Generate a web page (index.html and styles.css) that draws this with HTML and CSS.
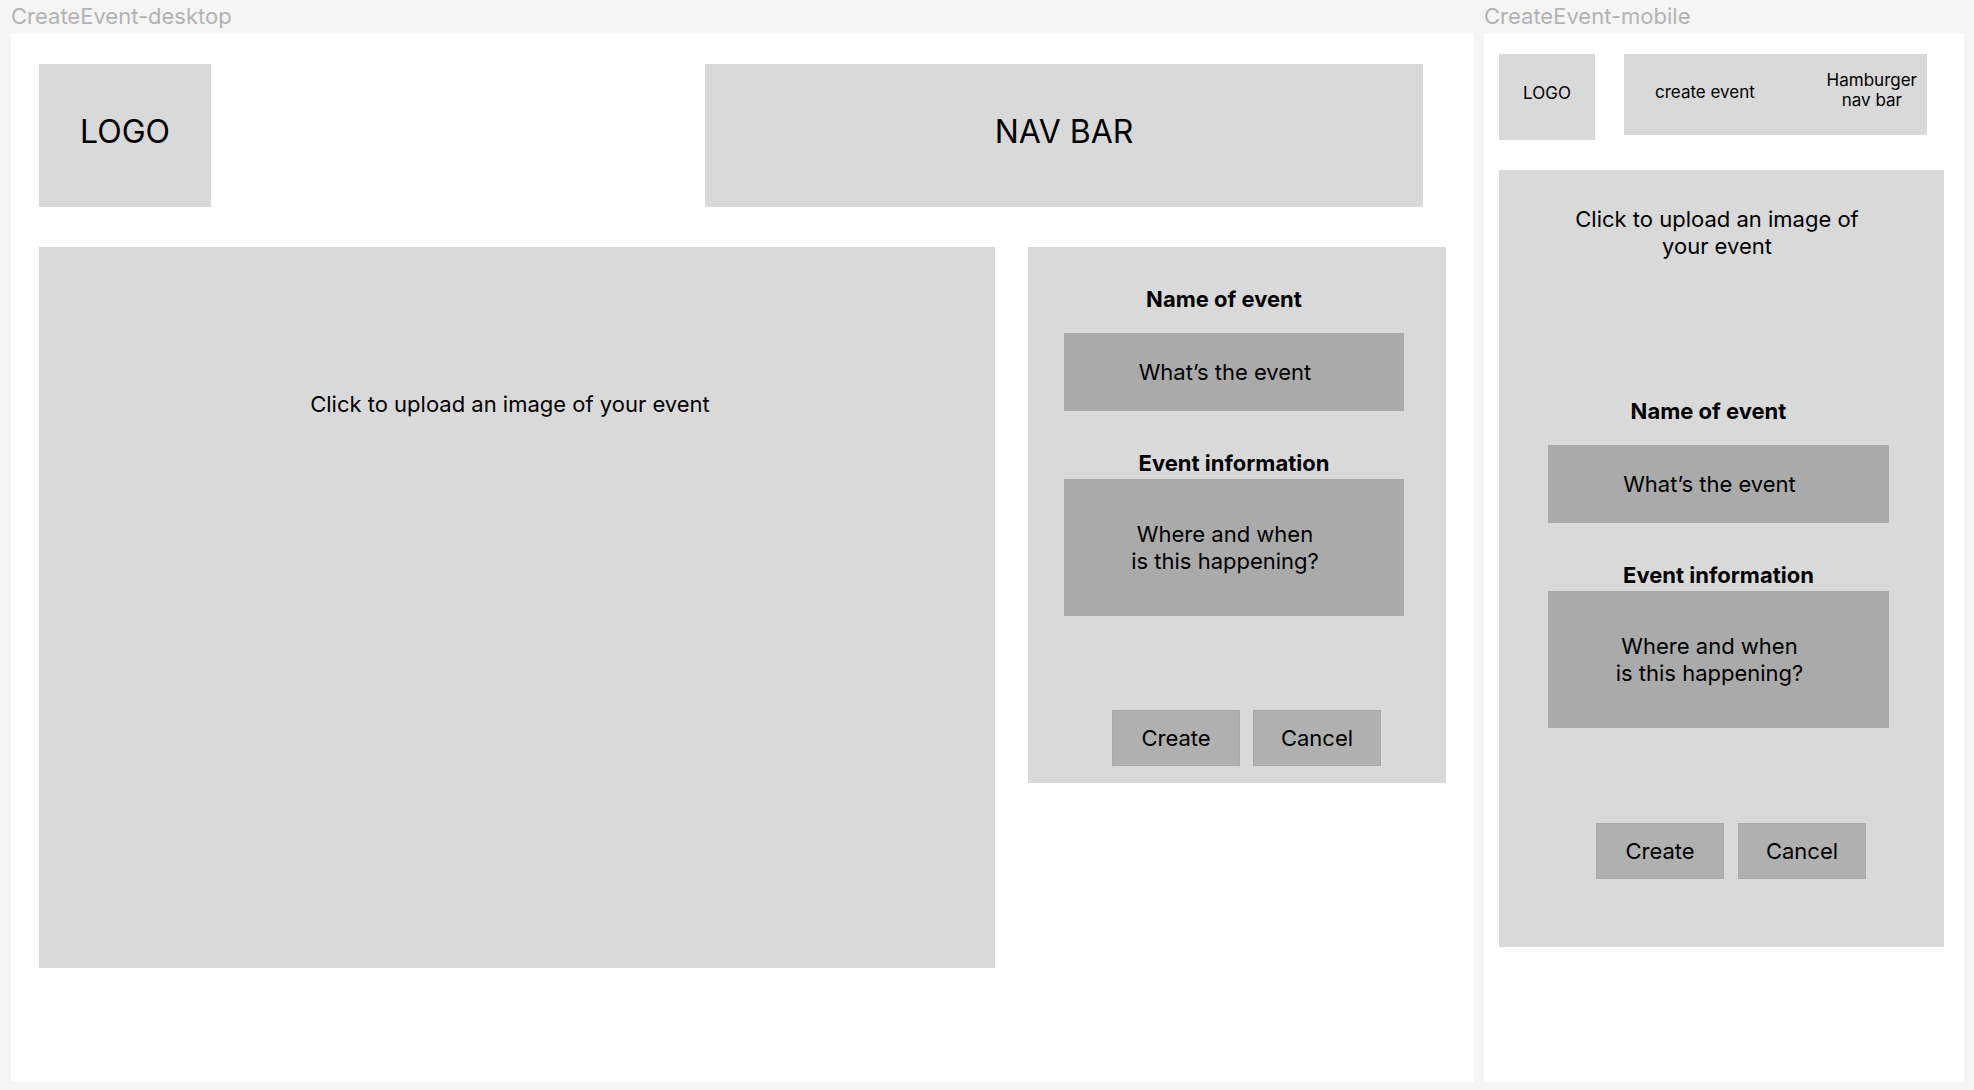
FILE: index.html
```html
<!DOCTYPE html>
<html lang="en">
<head>
<meta charset="utf-8">
<title>CreateEvent</title>
<link rel="stylesheet" href="styles.css">
</head>
<body>
<div class="canvas">
  <section class="col">
    <div class="label">CreateEvent-desktop</div>
    <div class="frame frame-desktop">
      <header class="d-header">
        <div class="box d-logo">LOGO</div>
        <div class="box d-nav">NAV BAR</div>
      </header>
      <main class="d-main">
        <div class="box d-image">Click to upload an image of your event</div>
        <div class="box d-form">
          <div class="form">
            <div class="heading shift">Name of event</div>
            <div class="field field-short shift-text">What’s the event</div>
            <div class="heading heading-info">Event information</div>
            <div class="field field-tall shift-text">Where and when<br>is this happening?</div>
            <div class="actions">
              <div class="btn">Create</div>
              <div class="btn">Cancel</div>
            </div>
          </div>
        </div>
      </main>
    </div>
  </section>
  <section class="col">
    <div class="label">CreateEvent-mobile</div>
    <div class="frame frame-mobile">
      <header class="m-header">
        <div class="box m-logo">LOGO</div>
        <div class="box m-nav">
          <span class="m-create">create event</span>
          <span class="m-burger">Hamburger<br>nav bar</span>
        </div>
      </header>
      <div class="box m-panel">
        <div class="m-upload">Click to upload an image of your event</div>
        <div class="form m-form">
          <div class="heading shift m-first">Name of event</div>
          <div class="field field-short shift-text">What’s the event</div>
          <div class="heading heading-info">Event information</div>
          <div class="field field-tall shift-text">Where and when<br>is this happening?</div>
          <div class="actions m-actions">
            <div class="btn">Create</div>
            <div class="btn">Cancel</div>
          </div>
        </div>
      </div>
    </div>
  </section>
</div>
</body>
</html>
```
FILE: styles.css
```css
* { box-sizing: border-box; }

html, body {
  margin: 0;
  padding: 0;
  background: #f5f5f5;
  font-family: Inter, "Noto Sans", "Liberation Sans", sans-serif;
  color: #000;
}

.canvas {
  display: flex;
  gap: 10px;
  padding-left: 11px;
  height: 1090px;
  overflow: hidden;
}

.label {
  height: 33px;
  padding-top: 3px;
  font-size: 22px;
  line-height: 27px;
  color: #b3b3b3;
  white-space: nowrap;
}

.frame {
  background: #ffffff;
  height: 1049px;
}

.box {
  background: #d9d9d9;
}

/* ---------- desktop ---------- */
.frame-desktop {
  width: 1463px;
  padding: 31px 28px 0 28px;
}

.d-header {
  display: flex;
  height: 143px;
}

.d-logo,
.d-nav {
  height: 143px;
  display: flex;
  align-items: center;
  justify-content: center;
  padding-bottom: 9px;
  font-size: 32px;
  line-height: 39px;
}

.d-logo { width: 172px; }

.d-nav {
  width: 718px;
  margin-left: auto;
  margin-right: 23px;
}

.d-main {
  display: flex;
  align-items: flex-start;
  gap: 33px;
  margin-top: 40px;
}

.d-image {
  width: 956px;
  height: 721px;
  padding-top: 144px;
  padding-right: 14px;
  text-align: center;
  font-size: 22px;
  line-height: 27px;
}

.d-form {
  width: 418px;
  height: 536px;
  padding-top: 39px;
  padding-left: 36px;
}

/* ---------- shared form ---------- */
.form { width: 340px; }

.heading {
  font-size: 22px;
  line-height: 27px;
  font-weight: 700;
  text-align: center;
}

.heading.shift { padding-right: 20px; }

.heading-info { margin-top: 39px; }

.field {
  background: #aaaaaa;
  display: flex;
  align-items: center;
  justify-content: center;
  text-align: center;
  font-size: 22px;
  line-height: 27px;
}

.field-short {
  margin-top: 20px;
  height: 78px;
}

.field-tall {
  margin-top: 2px;
  height: 137px;
}

.shift-text { padding-right: 18px; }

.actions {
  display: flex;
  gap: 13px;
  margin-top: 94px;
  margin-left: 48px;
}

.btn {
  width: 128px;
  height: 56px;
  background: #b0b0b0;
  border: 1px solid #a9a9a9;
  display: flex;
  align-items: center;
  justify-content: center;
  font-size: 22px;
  line-height: 27px;
}

/* ---------- mobile ---------- */
.frame-mobile {
  width: 480px;
  padding: 21px 20px 0 15px;
}

.m-header {
  display: flex;
  align-items: flex-start;
}

.m-logo {
  width: 96px;
  height: 86px;
  display: flex;
  align-items: center;
  justify-content: center;
  padding-bottom: 8px;
  font-size: 17px;
  line-height: 20px;
}

.m-nav {
  width: 303px;
  height: 81px;
  margin-left: 29px;
  display: flex;
  align-items: flex-start;
  font-size: 17px;
  line-height: 20px;
}

.m-create {
  margin-top: 28px;
  margin-left: 31px;
}

.m-burger {
  margin-top: 16px;
  margin-left: auto;
  padding-right: 10px;
  text-align: center;
}

.m-panel {
  width: 445px;
  height: 777px;
  margin-top: 30px;
  padding-top: 36px;
}

.m-upload {
  width: 300px;
  margin-left: 68px;
  text-align: center;
  font-size: 22px;
  line-height: 27px;
}

.m-form {
  width: 341px;
  margin-left: 49px;
}

.m-first { margin-top: 138px; }

.m-actions {
  gap: 14px;
  margin-top: 95px;
  margin-left: 48px;
}
```
